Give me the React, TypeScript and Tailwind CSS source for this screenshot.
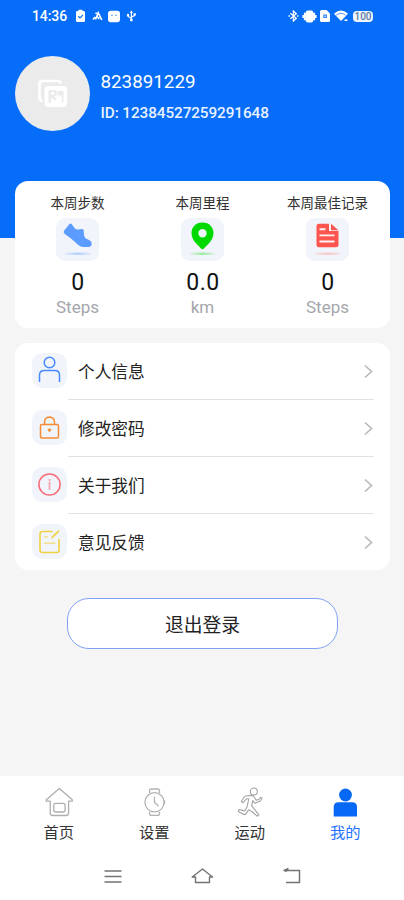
import type { ReactNode } from 'react';

const cjk = "font-['Roboto','Noto_Sans_CJK_SC',sans-serif]";

function StatusBar() {
  return (
    <div className="flex h-[32px] items-end justify-between pl-[32px] pr-[31px] text-white">
      <div className="flex h-[32px] items-center pt-0">
        <span className="w-[36px] whitespace-nowrap text-[14px] font-medium leading-[14px] tracking-[-0.1px]">14:36</span>
        <svg className="ml-[7px] h-[14px] w-[11px]" viewBox="0 0 11 14">
          <rect x="1" y="2" width="9" height="11" rx="1.3" fill="white" />
          <rect x="3.3" y="0.8" width="4.4" height="2.5" rx="1" fill="white" />
          <path d="M3.3 7.2l1.7 1.7 3-3" stroke="#066df8" strokeWidth="1.2" fill="none" />
        </svg>
        <svg className="ml-[6px] h-[12px] w-[11px]" viewBox="0 0 11 12">
          <path d="M1 9.3l2.2-2.1M3.3 3.2h1.6M3.5 9.5l2.7-6.7L9.8 10M5.3 6.7l2 2.2" stroke="white" strokeWidth="1.6" fill="none" />
        </svg>
        <svg className="ml-[5px] h-[13px] w-[12px]" viewBox="0 0 12 13">
          <rect x="0" y="0.7" width="12" height="11.6" rx="2.8" fill="white" />
          <path d="M3 5.2h2M7 5.2h2" stroke="#599cf8" strokeWidth="1" />
        </svg>
        <svg className="ml-[6px] h-[12px] w-[11px]" viewBox="0 0 11 12">
          <path d="M5.4 1v9.4M5.4 8.3L2 6.5V4.6M5.4 7L8.6 5.6V4" stroke="white" strokeWidth="1.2" fill="none" />
          <path d="M3.8 2.9L5.4.5 7 2.9z" fill="white" />
          <circle cx="5.4" cy="10" r="1.4" fill="white" />
          <circle cx="2" cy="5" r="1.2" fill="white" />
          <rect x="7.6" y="3.2" width="2.2" height="2.2" fill="white" />
        </svg>
      </div>
      <div className="flex h-[32px] items-center">
        <svg className="h-[12px] w-[11px]" viewBox="0 0 11 12">
          <path d="M2.3 3.3l6 5L5.4 11V1l2.9 2.7-6 5" stroke="white" strokeWidth="1.3" fill="none" />
          <path d="M.5 6h1.4M9.1 6h1.4" stroke="white" strokeWidth="1.5" />
        </svg>
        <svg className="ml-[3px] h-[13px] w-[15px]" viewBox="0 0 15 13">
          <rect x="3.8" y=".5" width="7.4" height="12" rx="1.8" fill="white" />
          <path d="M2.9 2.8v7.4M12.1 2.800v7.400" stroke="white" strokeWidth="2" />
          <path d="M1.200 5v3M13.800 5v3" stroke="white" strokeWidth="1.600" />
        </svg>
        <svg className="ml-[3px] h-[12px] w-[10px]" viewBox="0 0 10 12">
          <path d="M1.6 0h4.9L10 3.4v7.1Q10 12 8.5 12h-7Q0 12 0 10.5v-9Q0 0 1.6 0z" fill="white" />
          <rect x="3.2" y="4.5" width="3.8" height="3.5" fill="#3387fa" />
          <circle cx="5.1" cy="6.2" r=".8" fill="white" />
        </svg>
        <svg className="ml-[4px] h-[12px] w-[15px]" viewBox="0 0 15 12">
          <path d="M0 3.7Q7-2.7 14 3.7L7 11z" fill="white" />
          <path d="M2.3 5.2Q7 1.4 11.7 5.2" stroke="#3f8bfb" strokeWidth=".9" fill="none" />
          <path d="M10.5 10.2h3" stroke="white" strokeWidth="1.5" />
        </svg>
        <span className="ml-[4px] flex h-[11px] w-[20px] items-center justify-center rounded-[4px] bg-[#eef4ff] text-[10px] font-medium leading-[11px] text-[#5c7d9f]"><span className="mt-[1px]">100</span></span>
      </div>
    </div>
  );
}

function Profile() {
  return (
    <div className="mt-[24px] flex h-[75px] items-center pl-[15px] text-white">
      <div className="flex h-[75px] w-[75px] items-center justify-center rounded-full bg-[#ebebeb]">
        <svg className="h-[30px] w-[30px]" viewBox="0 0 30 30">
          <path d="M4.5 22Q1.500 21.500 1.500 18V5Q1.500 2 4.500 2h15Q22.500 2 23 4.500" fill="none" stroke="white" strokeWidth="2.700" />
          <rect x="6.500" y="7" width="22.500" height="21" rx="4" fill="white" />
          <path d="M10.500 11h5.500q3 0 3 3t-3 3.500l2.700 2.500-2 2-3.700-4v6h-2.500z" fill="#ebebeb" />
          <circle cx="14.700" cy="14.300" r="1.800" fill="white" />
          <path d="M19.500 12h6v11.500h-1.500V18l-2-2-2.500 2z" fill="#ebebeb" />
        </svg>
      </div>
      <div className="ml-[10.500px] flex flex-col pt-[8px]">
        <span className="mt-[-1px] text-[18.8px] leading-[30px]">823891229</span>
        <span className="mt-[3px] text-[15.300px] font-medium leading-[27px] tracking-[-0.080px] text-[#e9f1ff]">ID: 12384527259291648</span>
      </div>
    </div>
  );
}

function Stat({ title, value, unit, children }: { title: string; value: string; unit: string; children: ReactNode }) {
  return (
    <div className="flex w-[125px] flex-col items-center">
      <span className="mt-[12px] h-[20px] whitespace-nowrap text-[13.500px] leading-[20px] text-[#303030]">{title}</span>
      <div className="mt-[5px] flex h-[43px] w-[43px] items-center justify-center rounded-[9px] bg-[#f1f4fa]">{children}</div>
      <span className="mt-[8px] h-[28px] pl-[1px] text-[23px] leading-[28px] tracking-[0.500px] text-[#111]">{value}</span>
      <span className="mt-[-1px] h-[22px] text-[17px] leading-[22px] text-[#a5a6ac]">{unit}</span>
    </div>
  );
}

function Stats() {
  return (
    <section className="mx-[15px] mt-[50px] flex h-[147px] w-[375px] rounded-[13px] bg-white">
      <Stat title="本周步数" value="0" unit="Steps">
        <svg className="h-[43px] w-[43px]" viewBox="0 0 43 43">
          <defs><linearGradient id="shoe" x1="0" x2="1"><stop stopColor="#68a6ff" stopOpacity=".1" /><stop offset=".5" stopColor="#68a6ff" stopOpacity=".45" /><stop offset="1" stopColor="#68a6ff" stopOpacity=".1" /></linearGradient></defs>
          <path d="M13.500 6Q14.700 5 15.800 6.200L18.500 10Q20 11.800 22.500 11.500L26 11Q27.700 10.900 27.700 12.500L28 17Q28.200 19 29.500 20.200L33.500 22.200Q36 23.500 35.700 26Q35.300 29 32.500 29H27.500Q24.500 29 22.300 27L15 20.500L8.500 15.800Q7 14.400 8 12.700Z" fill="#5c9cff" />
          <rect x="9" y="34.500" width="26" height="2.500" rx="1.200" fill="url(#shoe)" />
        </svg>
      </Stat>
      <Stat title="本周里程" value="0.0" unit="km">
        <svg className="h-[43px] w-[43px]" viewBox="0 0 43 43">
          <defs><linearGradient id="pin" x1="0" x2="1"><stop stopColor="#00d900" stopOpacity=".05" /><stop offset=".5" stopColor="#00d900" stopOpacity=".35" /><stop offset="1" stopColor="#00d900" stopOpacity=".05" /></linearGradient></defs>
          <path fillRule="evenodd" d="M21.500 4.500C14.500 4.500 10.500 9.500 10.500 15c0 7.500 7 12.500 9.500 15.500q1.500 1.500 3 0c2.500-3 9.500-8 9.500-15.500 0-5.500-4-10.500-11-10.500zm0 6.500a4.200 4.200 0 1 1 0 8.400 4.200 4.200 0 0 1 0-8.400z" fill="#00d900" />
          <rect x="9" y="34.500" width="25" height="2.500" rx="1.200" fill="url(#pin)" />
        </svg>
      </Stat>
      <Stat title="本周最佳记录" value="0" unit="Steps">
        <svg className="h-[43px] w-[43px]" viewBox="0 0 43 43">
          <defs><linearGradient id="record" x1="0" x2="1"><stop stopColor="#ff615c" stopOpacity=".1" /><stop offset=".5" stopColor="#ff615c" stopOpacity=".3" /><stop offset="1" stopColor="#ff615c" stopOpacity=".1" /></linearGradient></defs>
          <path d="M13 5.700h10v7.300h9.500v13.700q0 2.500-2.500 2.500H13q-2.500 0-2.500-2.500V8.200q0-2.500 2.500-2.500z" fill="#ff554f" />
          <path d="M25 5.700l7.500 6.500H25z" fill="#ff554f" />
          <path d="M13.500 11.200h6M13.500 17.400h15M13.500 23.500h15" stroke="#fff1f1" strokeWidth="1.900" />
          <rect x="9" y="34.500" width="25" height="2.500" rx="1.200" fill="url(#record)" />
        </svg>
      </Stat>
    </section>
  );
}

function MenuRow({ label, children, last = false }: { label: string; children: ReactNode; last?: boolean }) {
  return (
    <div className="flex h-[57px] items-stretch">
      <div className="ml-[17px] mt-[10px] h-[35px] w-[35px] rounded-[10px] bg-[#f1f5fb]">{children}</div>
      <div className={`ml-[1px] flex w-[306px] items-center justify-between pl-[10px] ${last ? '' : 'border-b-[1.5px] border-[#e2e2e4]'}`}>
        <span className={`whitespace-nowrap text-[16.700px] leading-[24px] text-[#222] ${last ? 'pt-[2px]' : 'pt-[4px]'}`}>{label}</span>
        <svg className="h-[15px] w-[11px]" viewBox="0 0 11 15"><path d="M2 1.500l6.500 6L2 13.500" stroke="#b9babd" strokeWidth="1.700" fill="none" /></svg>
      </div>
    </div>
  );
}

function Menu() {
  return (
    <section className="mx-[15px] mt-[15px] h-[227px] w-[375px] rounded-[13px] bg-white">
      <MenuRow label="个人信息">
        <svg className="h-[35px] w-[35px]" viewBox="0 0 35 35" fill="none" stroke="#478aff" strokeWidth="1.500">
          <circle cx="17.500" cy="9.500" r="5.300" /><path d="M7.500 29v-7q0-4.500 5-4.500h10q5 0 5 4.500v7" />
        </svg>
      </MenuRow>
      <MenuRow label="修改密码">
        <svg className="h-[35px] w-[35px]" viewBox="0 0 35 35" fill="none" stroke="#f58c35" strokeWidth="1.500">
          <rect x="8.500" y="14.500" width="18" height="13.500" rx="1.500" /><path d="M12.500 14.500v-2.200q0-5 5-5.300 5 .3 5 5.300v2.200" /><path d="M16 19.200h3l-1.500 2.700z" fill="#f58c35" strokeWidth="1" />
        </svg>
      </MenuRow>
      <MenuRow label="关于我们">
        <svg className="h-[35px] w-[35px]" viewBox="0 0 35 35" fill="none" stroke="#fa6b75">
          <circle cx="17.500" cy="17.500" r="10.600" strokeWidth="1.500" /><path d="M17.500 12v2M17.500 14.700v8" strokeWidth="1.700" opacity=".6" />
        </svg>
      </MenuRow>
      <MenuRow label="意见反馈" last>
        <svg className="h-[35px] w-[35px]" viewBox="0 0 35 35" fill="none" stroke="#f1d140" strokeWidth="1.600">
          <path d="M20.500 7.500H10.500Q8 7.500 8 10v16q0 2.500 2.500 2.500H25q2 0 2-2V15M19.500 13.800l7.500-7" /><path d="M12 13h4M12 19.200h11.500" strokeWidth="1.500" opacity=".6" />
        </svg>
      </MenuRow>
    </section>
  );
}

function NavItem({ label, active = false, children }: { label: string; active?: boolean; children: ReactNode }) {
  return (
    <button className={`flex flex-1 flex-col items-center pt-[10px] text-[15.300px] leading-[22px] ${active ? 'text-[#2672ff]' : 'text-[#333]'}`}>
      {children}<span className="mt-[4px]">{label}</span>
    </button>
  );
}

function BottomNav() {
  return (
    <nav className="flex h-[75px] px-[11px]">
      <NavItem label="首页">
        <svg className="h-[32px] w-[32px]" viewBox="0 0 32 32" fill="none" stroke="#adafae" strokeWidth="1.300" strokeLinejoin="round">
          <path d="M16.300 2.500L3.300 13.700v1.500h3.900V27q0 2.500 2.500 2.500h13.400q2.500 0 2.500-2.500V15.200h3.700v-1.500z" /><rect x="10.800" y="17.300" width="11.300" height="8.700" rx="2" />
        </svg>
      </NavItem>
      <NavItem label="设置">
        <svg className="h-[32px] w-[32px]" viewBox="0 0 32 32" fill="none" stroke="#b2b3b3" strokeWidth="1.300">
          <circle cx="16.500" cy="16.300" r="9.600" /><path d="M11.500 7V5q0-2 2-2h6q2 0 2 2v2M11.500 25.700v1.800q0 1.900 2 1.900h6q2 0 2-1.900v-1.800M16.500 10.800v5.500l4 4M26.500 14.300v4" />
        </svg>
      </NavItem>
      <NavItem label="运动">
        <svg className="h-[32px] w-[32px]" viewBox="0 0 32 32" fill="none" stroke="#a2a4a3" strokeWidth="1.100" strokeLinejoin="round">
          <circle cx="19.800" cy="5.500" r="3.500" />
          <path d="M18 9.400l-6 .6q-1.200.2-1.900 1.300L7.300 15.500l1.800 1.200 3.400-3.900 2.300-.1-1.700 8-2.300 4.200-5.800-1.400-.7 2 5.200 2.700q1.800.7 2.800-.8l2.300-3.700 4 2.300 4.500 4.200 1.800-1.400-4.100-5.200-3.100-3.800 1-5.200 2.300 2.700 5.300-2.300 1.800-2.900-1.400-.7-1.900 2.100-2.600.6-2-2.900q-.7-1.800-2.200-1.800z" />
        </svg>
      </NavItem>
      <NavItem label="我的" active>
        <svg className="h-[32px] w-[32px]" viewBox="0 0 32 32" fill="#0668f5">
          <circle cx="16.500" cy="9" r="6.400" /><path d="M4.700 30.500v-9.500q0-4.800 4.800-4.800h13.700q4.800 0 4.800 4.800v9.500z" />
        </svg>
      </NavItem>
    </nav>
  );
}

export default function App() {
  return (
    <main className={`flex h-[900px] w-[404px] flex-col overflow-hidden bg-[#f5f5f6] bg-[linear-gradient(#066df8_238px,#f5f5f6_238px)] ${cjk}`}>
      <StatusBar />
      <Profile />
      <Stats />
      <Menu />
      <button className="ml-[67px] mt-[28px] h-[51px] w-[271px] rounded-[22px] border-[1.5px] border-[#7fa2f5] bg-white pt-[4px] text-[18.800px] leading-[28px] text-[#222]">退出登录</button>
      <footer className="mt-auto h-[124px] bg-white">
        <BottomNav />
        <div className="flex h-[49px] items-center justify-between px-[102px]">
          <svg className="h-[22px] w-[22px]" viewBox="0 0 22 22"><path d="M2.500 6h17M2.500 11.500h17M2.500 17h17" stroke="#737373" strokeWidth="1.600" /></svg>
          <svg className="h-[22px] w-[24px]" viewBox="0 0 24 22"><path d="M5.500 12H2.200L12.500 4l10 8h-3v5.500h-14z" fill="none" stroke="#737373" strokeWidth="1.400" strokeLinejoin="round" /></svg>
          <svg className="h-[22px] w-[22px]" viewBox="0 0 22 22"><path d="M8.500 3.500L4 5.500h15.500v12H6M4 5.500l3 .8" fill="none" stroke="#737373" strokeWidth="1.500" strokeLinejoin="round" /></svg>
        </div>
      </footer>
    </main>
  );
}
